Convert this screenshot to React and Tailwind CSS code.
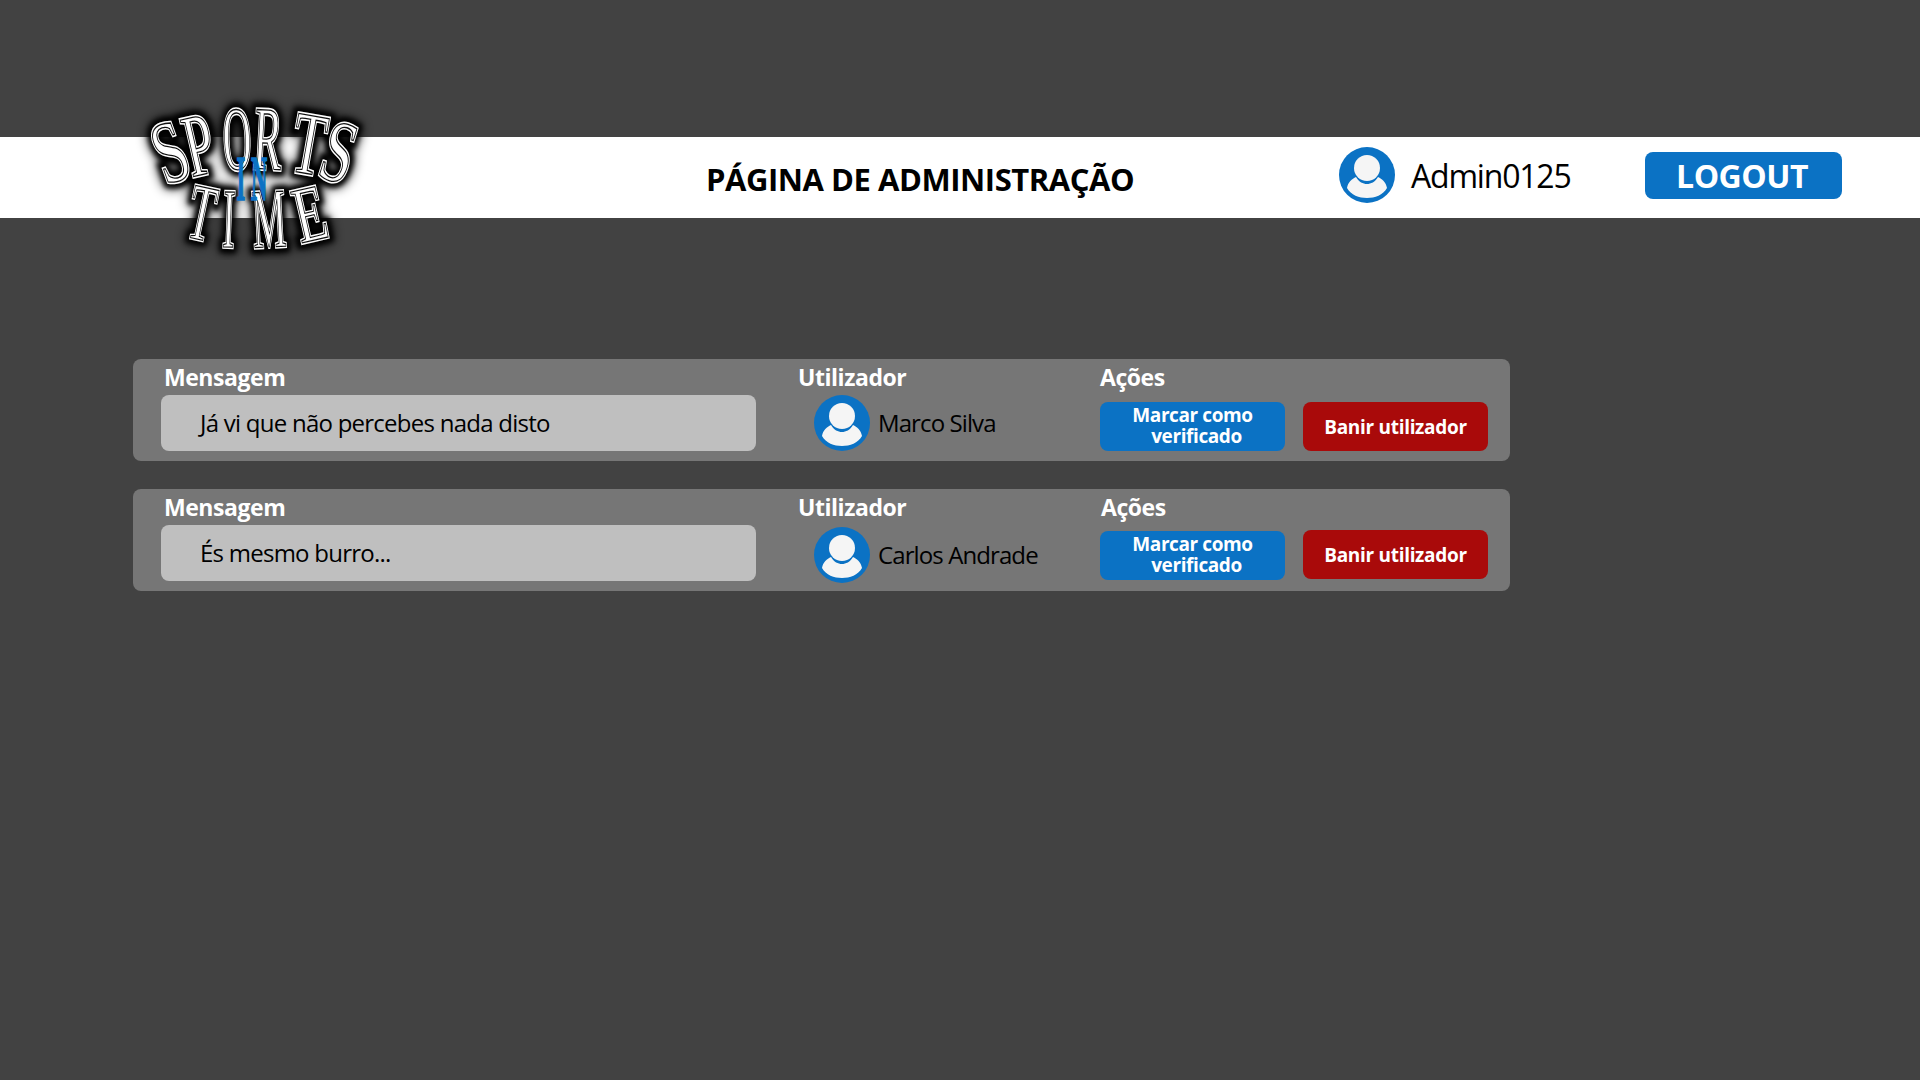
const FONT = "font-['Open_Sans',sans-serif]";

const ROWS = [
  {
    id: 1,
    message: "Já vi que não percebes nada disto",
    user: "Marco Silva",
    avatarClass: "mt-0",
    actionsClass: "pl-0",
    blueClass: "mt-[7px]",
    redClass: "mt-[7px]",
  },
  {
    id: 2,
    message: "És mesmo burro...",
    user: "Carlos Andrade",
    avatarClass: "mt-[2px]",
    actionsClass: "pl-[1px]",
    blueClass: "mt-[6px]",
    redClass: "mt-[5px]",
  },
];

const LETTERS = [
  { c: "S", x: 50, y: 62, r: -20, h: 2.95, sx: 1.9 },
  { c: "P", x: 79, y: 55, r: -13, h: 2.95, sx: 1.7 },
  { c: "O", x: 117, y: 49, r: -2, h: 3, sx: 1.3 },
  { c: "R", x: 148, y: 49, r: 3, h: 3, sx: 1.4 },
  { c: "T", x: 189, y: 54, r: 10, h: 2.95, sx: 1.8 },
  { c: "S", x: 219, y: 62, r: 17, h: 2.95, sx: 1.9 },
  { c: "T", x: 82, y: 123, r: 12, h: 2.65, sx: 1.4 },
  { c: "I", x: 109, y: 129, r: 2, h: 2.8, sx: 1.2 },
  { c: "M", x: 149, y: 129, r: -3, h: 2.8, sx: 1.25 },
  { c: "E", x: 190, y: 124, r: -13, h: 2.65, sx: 1.7 },
];

function Avatar({ className = "" }) {
  return (
    <svg viewBox="0 0 56 56" className={`w-14 h-14 shrink-0 ${className}`}>
      <circle cx="28" cy="28" r="28" fill="#0b72c4" />
      <circle cx="28" cy="21" r="13" fill="#f5f5f5" />
      <path
        d="M8 41C9 35 13 32 17 30C20 35 24 37 28 37C32 37 36 35 39 30C43 32 47 35 48 41C44 48 36 51 28 51C20 51 12 48 8 41Z"
        fill="#f5f5f5"
      />
    </svg>
  );
}

function Glyph({ c, fill, stroke, strokeWidth, weight = "400" }) {
  return (
    <text
      textAnchor="middle"
      y="10"
      fontSize="30"
      fontFamily="'Liberation Serif', serif"
      fontWeight={weight}
      fill={fill}
      stroke={stroke}
      strokeWidth={strokeWidth}
    >
      {c}
    </text>
  );
}

function letterTransform(l) {
  return `translate(${l.x} ${l.y}) rotate(${l.r}) scale(${l.sx} ${l.h})`;
}

function Halo({ blur }) {
  return (
    <g filter={`url(#${blur})`}>
      {LETTERS.map((l, i) => (
        <g key={i} transform={letterTransform(l)}>
          <Glyph c={l.c} fill="#000000" stroke="#000000" strokeWidth="4" weight="700" />
        </g>
      ))}
    </g>
  );
}

function Logo() {
  return (
    <svg viewBox="0 0 270 170" className="absolute left-[120px] top-[90px] w-[270px] h-[170px]">
      <defs>
        <filter id="logoGlow" x="-20%" y="-20%" width="140%" height="140%">
          <feGaussianBlur stdDeviation="6" />
        </filter>
        <filter id="logoGlowTight" x="-20%" y="-20%" width="140%" height="140%">
          <feGaussianBlur stdDeviation="2.5" />
        </filter>
      </defs>
      {/* dark halo behind the letters */}
      <Halo blur="logoGlow" />
      <Halo blur="logoGlowTight" />
      {LETTERS.map((l, i) => (
        <g key={i} transform={letterTransform(l)}>
          <Glyph c={l.c} fill="#ffffff" stroke="#ffffff" strokeWidth="1.5" />
          <Glyph c={l.c} fill="#ffffff" stroke="#111111" strokeWidth="0.45" />
        </g>
      ))}
      <g transform="translate(121 89) scale(0.75 2.1)">
        <Glyph c="I" fill="#0b72c4" stroke="#0b72c4" strokeWidth="0.8" weight="700" />
      </g>
      <g transform="translate(139 89) scale(0.75 2.1)">
        <Glyph c="N" fill="#0b72c4" stroke="#0b72c4" strokeWidth="0.8" weight="700" />
      </g>
    </svg>
  );
}

function Row({ row }) {
  const headingClass = "h-[36px] pt-[2px] text-white font-bold text-[23px] tracking-[-0.45px] leading-[32px]";
  return (
    <div className="w-[1377px] h-[102px] bg-[#767676] rounded-[8px] flex pl-[28px]">
      <div className="w-[595px]">
        <div className={`pl-[3px] ${headingClass}`}>Mensagem</div>
        <div className="h-[56px] bg-[#bfbfbf] rounded-[8px] pl-[39px] flex items-center text-black text-[24px] tracking-[-0.75px]">
          {row.message}
        </div>
      </div>
      <div className="w-[302px] ml-[42px]">
        <div className={headingClass}>Utilizador</div>
        <div className={`flex items-center gap-[8px] pl-[16px] ${row.avatarClass}`}>
          <Avatar />
          <span className="text-black text-[24px] tracking-[-0.9px] -mt-[1px]">{row.user}</span>
        </div>
      </div>
      <div className="w-[388px]">
        <div className={`${headingClass} ${row.actionsClass}`}>Ações</div>
        <div className="flex gap-[18px]">
          <button className={`w-[185px] h-[49px] bg-[#0b72c4] rounded-[8px] text-white font-bold text-[19px] leading-[21px] tracking-[-0.4px] pb-[2px] ${row.blueClass}`}>
            <span className="block">Marcar como</span>
            <span className="block pl-[8px]">verificado</span>
          </button>
          <button className={`w-[185px] h-[49px] bg-[#a90a0a] rounded-[8px] text-white font-bold text-[19px] tracking-[-0.3px] pt-[1px] ${row.redClass}`}>
            Banir utilizador
          </button>
        </div>
      </div>
    </div>
  );
}

export default function App() {
  return (
    <div className={`relative min-h-[1080px] bg-[#424242] pt-[137px] overflow-hidden ${FONT}`}>
      <header className="h-[81px] bg-white flex items-center pl-[706px]">
        <h1 className="w-[633px] pt-[3px] text-black font-bold text-[31px] tracking-[-0.45px]">
          PÁGINA DE ADMINISTRAÇÃO
        </h1>
        <div className="flex items-center gap-[16px] w-[306px] -mt-[5px]">
          <Avatar />
          <span className="text-black text-[32px] tracking-[-1.2px] pt-[2px]">Admin0125</span>
        </div>
        <button className="w-[197px] h-[47px] bg-[#0b72c4] rounded-[8px] text-white font-bold text-[32px] tracking-[-0.5px] -mt-[4px] pr-[3px]">
          LOGOUT
        </button>
      </header>
      <Logo />
      <main className="pl-[133px] pt-[141px] flex flex-col gap-[28px]">
        {ROWS.map((row) => (
          <Row key={row.id} row={row} />
        ))}
      </main>
    </div>
  );
}
